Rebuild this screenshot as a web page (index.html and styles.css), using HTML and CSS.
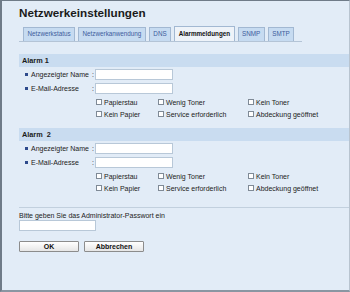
FILE: index.html
```html
<!DOCTYPE html>
<html lang="de">
<head>
  <meta charset="UTF-8" />
  <title>Netzwerkeinstellungen</title>
  <link rel="stylesheet" href="styles.css">
</head>
<body>
  <div class="frame">
    <h1>Netzwerkeinstellungen</h1>

    <div class="tabs">
      <span class="tab">Netzwerkstatus</span>
      <span class="tab">Netzwerkanwendung</span>
      <span class="tab">DNS</span>
      <span class="tab active">Alarmmeldungen</span>
      <span class="tab">SNMP</span>
      <span class="tab">SMTP</span>
    </div>

    <div class="section">
      <div class="section-head">Alarm 1</div>
      <div class="field"><span class="bullet"></span><span class="label">Angezeigter Name</span><span class="colon">:</span><span class="input"></span></div>
      <div class="field"><span class="bullet"></span><span class="label">E-Mail-Adresse</span><span class="colon">:</span><span class="input"></span></div>
      <div class="checks">
        <label><span class="box"></span>Papierstau</label>
        <label><span class="box"></span>Wenig Toner</label>
        <label><span class="box"></span>Kein Toner</label>
        <label><span class="box"></span>Kein Papier</label>
        <label><span class="box"></span>Service erforderlich</label>
        <label><span class="box"></span>Abdeckung geöffnet</label>
      </div>
    </div>

    <div class="section">
      <div class="section-head">Alarm&nbsp;&nbsp;2</div>
      <div class="field"><span class="bullet"></span><span class="label">Angezeigter Name</span><span class="colon">:</span><span class="input"></span></div>
      <div class="field"><span class="bullet"></span><span class="label">E-Mail-Adresse</span><span class="colon">:</span><span class="input"></span></div>
      <div class="checks">
        <label><span class="box"></span>Papierstau</label>
        <label><span class="box"></span>Wenig Toner</label>
        <label><span class="box"></span>Kein Toner</label>
        <label><span class="box"></span>Kein Papier</label>
        <label><span class="box"></span>Service erforderlich</label>
        <label><span class="box"></span>Abdeckung geöffnet</label>
      </div>
    </div>

    <div class="admin">
      <div class="hint">Bitte geben Sie das Administrator-Passwort ein</div>
      <span class="input pw"></span>
      <div class="buttons">
        <span class="btn">OK</span>
        <span class="btn">Abbrechen</span>
      </div>
    </div>
  </div>
</body>
</html>
```

FILE: styles.css
```css
body {
  margin: 0;
  font-family: "Liberation Sans", Arial, sans-serif;
  font-size: 7px;
  color: #222;
}

.frame {
  box-sizing: border-box;
  width: 350px;
  height: 292px;
  background: #e2ecf7;
  border-left: 2px solid #6f7b88;
  border-top: 1px solid #6f7b88;
  border-bottom: 2px solid #8a96a2;
  border-right: 1px solid #b8c4d0;
  padding: 0 0 0 17px;
  overflow: hidden;
}

h1 {
  margin: 0;
  padding-top: 5px;
  font-size: 11.7px;
  line-height: 14px;
  font-weight: bold;
  color: #1a1a1a;
}

.tabs {
  display: flex;
  gap: 3px;
  margin: 6px 0 0 0;
  padding-left: 4px;
  width: 279px;
  border-bottom: 1px solid #b4c4d6;
  height: 15px;
}

.tab {
  box-sizing: border-box;
  height: 14px;
  margin-top: 1px;
  padding: 0 3.5px;
  line-height: 12px;
  background: #c6dbf1;
  border: 1px solid #a2b8d2;
  border-bottom: none;
  color: #3d5c9c;
  font-size: 6.3px;
  white-space: nowrap;
}

.tab.active {
  height: 15px;
  margin-top: 0;
  line-height: 14px;
  background: #eef3f9;
  color: #111;
  font-weight: bold;
}

.section {
  margin-top: 12px;
}

.section + .section {
  margin-top: 10px;
}

.section-head {
  height: 13px;
  line-height: 13px;
  padding-left: 3px;
  background: #c9dcf0;
  font-weight: bold;
  font-size: 7.3px;
  color: #1a1a1a;
}

.field {
  display: flex;
  align-items: center;
  height: 11px;
  margin-top: 3px;
  padding-left: 6px;
}

.section-head + .field {
  margin-top: 2px;
}

.bullet {
  width: 3px;
  height: 3px;
  background: #2e4a8c;
  margin-right: 3px;
}

.label {
  width: 61px;
  white-space: nowrap;
  color: #222;
}

.colon {
  width: 3px;
}

.input {
  display: block;
  box-sizing: border-box;
  width: 78px;
  height: 11px;
  background: #fff;
  border: 1px solid #b8c8d8;
}

.checks {
  display: grid;
  grid-template-columns: 62px 90px 80px;
  row-gap: 4px;
  margin: 4px 0 0 77px;
}

.checks label {
  display: flex;
  align-items: center;
  height: 8px;
  white-space: nowrap;
}

.box {
  box-sizing: border-box;
  width: 6px;
  height: 6px;
  margin-right: 2px;
  background: #fff;
  border: 1px solid #7f8a96;
}

.admin {
  margin-top: 15px;
  border-top: 1px solid #c2d0de;
  padding-top: 3px;
}

.hint {
  line-height: 9px;
}

.pw {
  width: 77px;
}

.buttons {
  display: flex;
  gap: 5px;
  margin-top: 10px;
}

.btn {
  box-sizing: border-box;
  width: 60px;
  height: 11px;
  line-height: 9px;
  text-align: center;
  font-weight: bold;
  background: linear-gradient(#ffffff, #e6e6e6);
  border: 1px solid #8c8c8c;
  border-radius: 1px;
  color: #111;
}
```
